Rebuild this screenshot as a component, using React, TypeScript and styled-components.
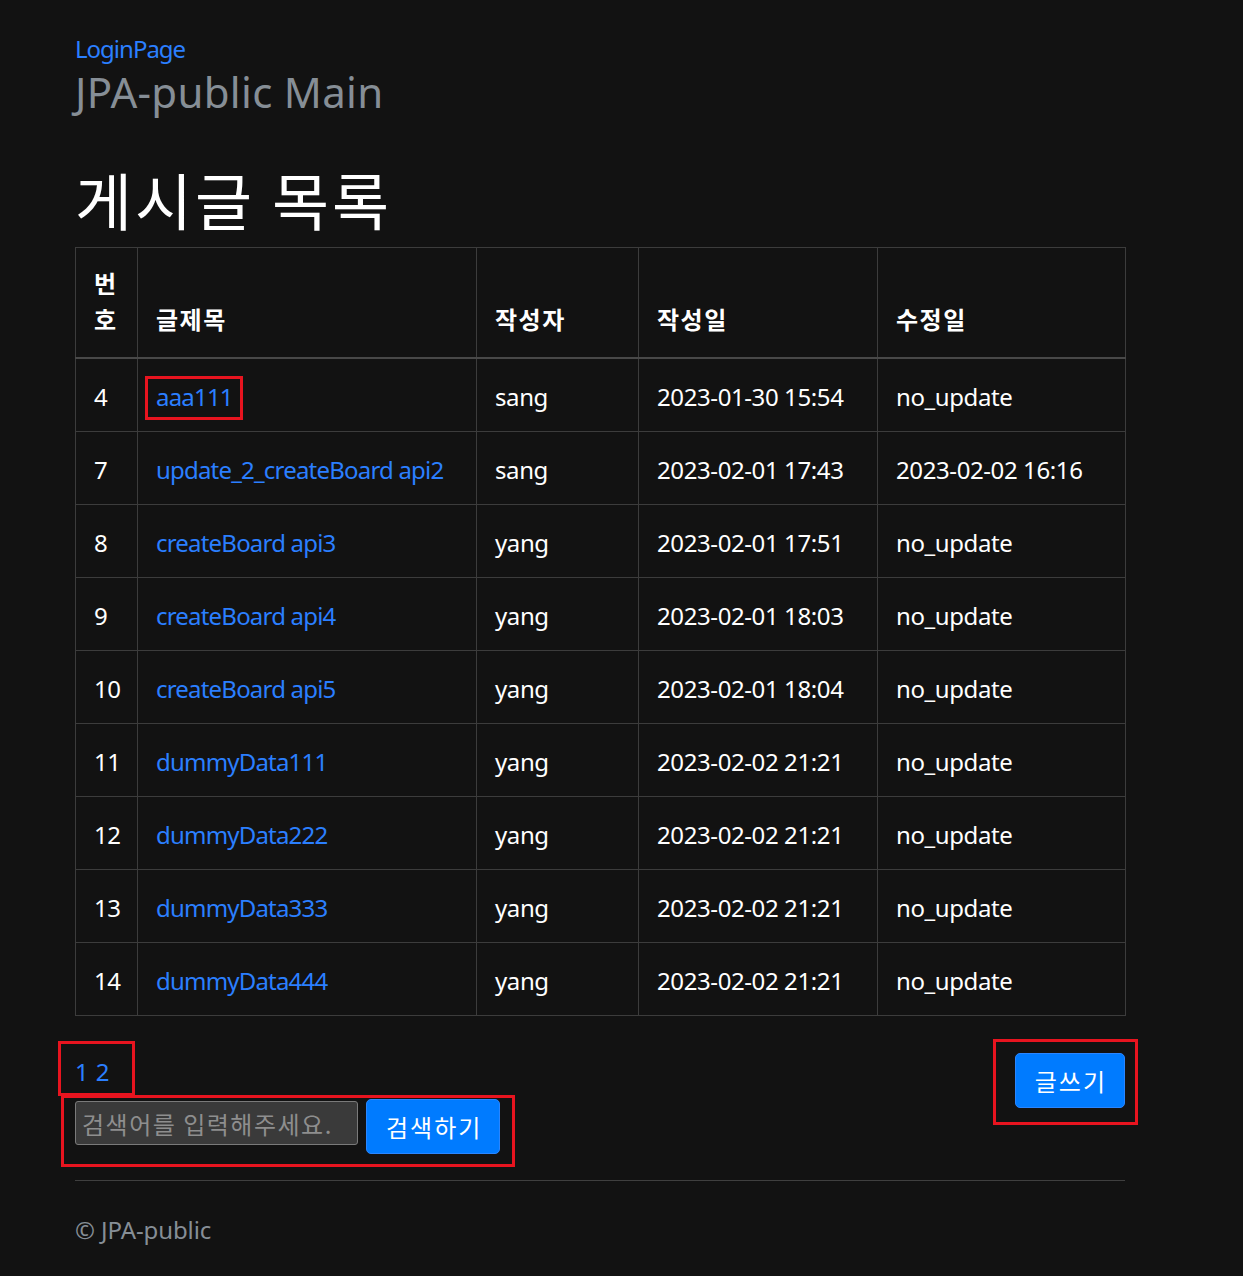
import React from "react";
import styled, { createGlobalStyle } from "styled-components";

const GlobalStyle = createGlobalStyle`
  html, body {
    margin: 0;
    padding: 0;
    background: #121212;
  }
  body {
    color: #ffffff;
    font-family: "Noto Sans", "Noto Sans CJK KR", sans-serif;
    font-size: 24px;
    line-height: 1.5;
  }
`;

const RED = "#e8141f";

const Page = styled.div`
  width: 1050px;
  margin-left: 75px;
  padding-top: 31px;
  padding-bottom: 20px;
`;

const NavLink = styled.a`
  display: block;
  color: #2b7fff;
  text-decoration: none;
  font-size: 24px;
  line-height: 36px;
  letter-spacing: -1px;
`;

const SiteTitle = styled.h2`
  margin: 1px 0 0;
  font-size: 42px;
  line-height: 48px;
  font-weight: 400;
  color: #868e96;
  letter-spacing: 0.3px;
`;

const PageTitle = styled.h1`
  margin: 43px 0 8px;
  font-size: 62px;
  line-height: 80px;
  font-weight: 400;
  color: #ffffff;
  letter-spacing: 3px;
  font-family: "Noto Sans CJK KR", sans-serif;
`;

const Table = styled.table`
  width: 1050px;
  border-collapse: collapse;
  table-layout: fixed;
  border: 1px solid #3c3c3c;
`;

const HeadCell = styled.th`
  border: 1px solid #3c3c3c;
  border-bottom: 2px solid #484848;
  padding: 17px 18px 20px;
  text-align: left;
  vertical-align: bottom;
  font-family: "Noto Sans CJK KR", sans-serif;
  font-weight: 700;
  font-size: 24px;
  line-height: 36px;
  letter-spacing: 1.5px;
  color: #ffffff;
`;

const Cell = styled.td`
  border: 1px solid #3c3c3c;
  padding: 20px 18px 16px;
  height: 36px;
  font-size: 24px;
  line-height: 36px;
  color: #ffffff;
  letter-spacing: -0.4px;
  white-space: nowrap;
`;

const TitleLink = styled.a<{ $marked?: boolean }>`
  position: relative;
  display: inline-block;
  color: #2b7fff;
  text-decoration: none;
  letter-spacing: -0.8px;
  &::after {
    content: "";
    display: ${(p) => (p.$marked ? "block" : "none")};
    position: absolute;
    left: -11px;
    right: -10px;
    top: -3px;
    bottom: -5px;
    border: 3px solid ${RED};
  }
`;

const Bottom = styled.div`
  display: flex;
  justify-content: space-between;
  align-items: flex-start;
  margin-top: 37px;
`;

const LeftCol = styled.div`
  display: flex;
  flex-direction: column;
  align-items: flex-start;
  gap: 9px;
  padding-top: 1px;
`;

const Marked = styled.div<{ $l: number; $r: number; $t: number; $b: number }>`
  position: relative;
  &::after {
    content: "";
    position: absolute;
    left: ${(p) => -p.$l}px;
    right: ${(p) => -p.$r}px;
    top: ${(p) => -p.$t}px;
    bottom: ${(p) => -p.$b}px;
    border: 3px solid ${RED};
    pointer-events: none;
  }
`;

const Pager = styled.div`
  display: flex;
  gap: 7px;
  font-size: 24px;
  line-height: 36px;
`;

const PageLink = styled.a`
  color: #2b7fff;
  text-decoration: none;
`;

const SearchForm = styled.form`
  display: flex;
  align-items: flex-start;
  gap: 8px;
`;

const SearchInput = styled.input`
  box-sizing: border-box;
  width: 283px;
  height: 44px;
  margin-top: 2px;
  padding: 0 6px;
  background: #3a3a3a;
  border: 1px solid #7a7a7a;
  border-radius: 3px;
  color: #ffffff;
  font-family: "Noto Sans CJK KR", sans-serif;
  font-size: 24px;
  letter-spacing: 1.5px;
  outline: none;
  &::placeholder {
    color: #8e8e8e;
  }
`;

const PrimaryButton = styled.button`
  box-sizing: border-box;
  height: 55px;
  padding: 0 17px 0 19px;
  background: #007bff;
  border: 1px solid #2a86ff;
  border-radius: 5px;
  color: #ffffff;
  font-family: "Noto Sans CJK KR", sans-serif;
  font-size: 24px;
  line-height: 36px;
  letter-spacing: 2px;
  cursor: pointer;
`;

const Divider = styled.hr`
  margin: 26px 0 0;
  border: 0;
  border-top: 1px solid #3f3f3f;
`;

const Footer = styled.footer`
  margin-top: 31px;
  color: #868e96;
  font-size: 24px;
  line-height: 36px;
  letter-spacing: -0.1px;
`;

type Row = { id: number; title: string; writer: string; created: string; updated: string };

const rows: Row[] = [
  { id: 4, title: "aaa111", writer: "sang", created: "2023-01-30 15:54", updated: "no_update" },
  { id: 7, title: "update_2_createBoard api2", writer: "sang", created: "2023-02-01 17:43", updated: "2023-02-02 16:16" },
  { id: 8, title: "createBoard api3", writer: "yang", created: "2023-02-01 17:51", updated: "no_update" },
  { id: 9, title: "createBoard api4", writer: "yang", created: "2023-02-01 18:03", updated: "no_update" },
  { id: 10, title: "createBoard api5", writer: "yang", created: "2023-02-01 18:04", updated: "no_update" },
  { id: 11, title: "dummyData111", writer: "yang", created: "2023-02-02 21:21", updated: "no_update" },
  { id: 12, title: "dummyData222", writer: "yang", created: "2023-02-02 21:21", updated: "no_update" },
  { id: 13, title: "dummyData333", writer: "yang", created: "2023-02-02 21:21", updated: "no_update" },
  { id: 14, title: "dummyData444", writer: "yang", created: "2023-02-02 21:21", updated: "no_update" },
];

const widths = [62, 339, 162, 239, 248];

export default function App() {
  return (
    <>
      <GlobalStyle />
      <Page>
        <NavLink href="#">LoginPage</NavLink>
        <SiteTitle>JPA-public Main</SiteTitle>
        <PageTitle>게시글 목록</PageTitle>
        <Table>
          <colgroup>
            {widths.map((w, i) => (
              <col key={i} style={{ width: w }} />
            ))}
          </colgroup>
          <thead>
            <tr>
              <HeadCell>번호</HeadCell>
              <HeadCell>글제목</HeadCell>
              <HeadCell>작성자</HeadCell>
              <HeadCell>작성일</HeadCell>
              <HeadCell>수정일</HeadCell>
            </tr>
          </thead>
          <tbody>
            {rows.map((r, i) => (
              <tr key={r.id}>
                <Cell>{r.id}</Cell>
                <Cell>
                  <TitleLink href="#" $marked={i === 0}>
                    {r.title}
                  </TitleLink>
                </Cell>
                <Cell>{r.writer}</Cell>
                <Cell>{r.created}</Cell>
                <Cell>{r.updated}</Cell>
              </tr>
            ))}
          </tbody>
        </Table>
        <Bottom>
          <LeftCol>
            <Marked $l={17} $r={26} $t={13} $b={6}>
              <Pager>
                <PageLink href="#">1</PageLink>
                <PageLink href="#">2</PageLink>
              </Pager>
            </Marked>
            <Marked $l={14} $r={15} $t={4} $b={13}>
              <SearchForm onSubmit={(e) => e.preventDefault()}>
                <SearchInput placeholder="검색어를 입력해주세요." />
                <PrimaryButton type="submit">검색하기</PrimaryButton>
              </SearchForm>
            </Marked>
          </LeftCol>
          <Marked $l={22} $r={13} $t={14} $b={17}>
            <PrimaryButton type="button">글쓰기</PrimaryButton>
          </Marked>
        </Bottom>
        <Divider />
        <Footer>© JPA-public</Footer>
      </Page>
    </>
  );
}
